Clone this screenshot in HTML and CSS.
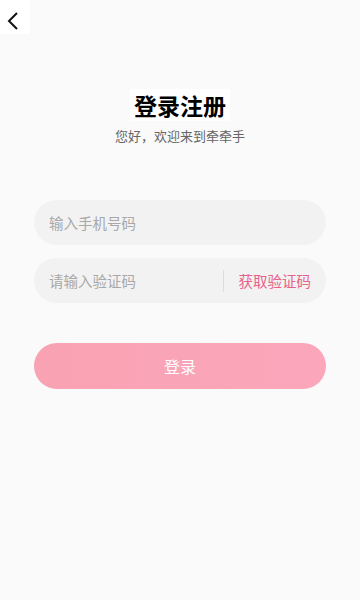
FILE: index.html
```html
<!DOCTYPE html>
<html lang="zh">
<head>
<meta charset="utf-8">
<link rel="stylesheet" href="styles.css">
</head>
<body>
<div class="page">
  <div class="topbar">
    <div class="back">
      <svg width="14" height="20" viewBox="0 0 14 20"><path d="M11 2 L3 10 L11 18" fill="none" stroke="#111" stroke-width="2"/></svg>
    </div>
  </div>
  <div class="header">
    <h1 class="title">登录注册</h1>
    <p class="subtitle">您好，欢迎来到牵牵手</p>
  </div>
  <div class="form">
    <div class="field"><span class="placeholder">输入手机号码</span></div>
    <div class="field code">
      <span class="placeholder">请输入验证码</span>
      <span class="divider"></span>
      <span class="getcode">获取验证码</span>
    </div>
    <div class="btn">登录</div>
  </div>
</div>
</body>
</html>
```
FILE: styles.css
```css
html, body { margin: 0; padding: 0; }
body {
  background: #fafafa;
  font-family: "Noto Sans CJK SC", "Noto Sans", sans-serif;
  width: 360px;
  height: 600px;
  overflow: hidden;
}
.page { display: flex; flex-direction: column; }
.topbar { height: 40px; display: flex; }
.back {
  width: 30px; height: 34px;
  background: #fff;
  display: flex; align-items: center; justify-content: center;
  padding-right: 4px; box-sizing: border-box;
  padding-top: 7px;
}
.header { display: flex; flex-direction: column; align-items: center; margin-top: 49px; }
.title {
  margin: 0; font-size: 23px; font-weight: 700; color: #000;
  line-height: 32px; background: #fff; padding: 0 4px;
}
.subtitle { margin: 0; margin-top: 5px; font-size: 13px; color: #666; line-height: 20px; }
.form { display: flex; flex-direction: column; padding: 0 34px; margin-top: 54px; }
.field {
  height: 45px; border-radius: 23px; background: #f2f2f2;
  display: flex; align-items: center; padding: 0 15px;
  margin-bottom: 13px;
}
.placeholder { font-size: 14.5px; color: #a8a8a8; flex: 1; }
.divider { width: 1px; height: 22px; background: #ddd; margin-right: 15px; }
.getcode { font-size: 14.5px; color: #e7618a; }
.btn {
  margin-top: 27px; height: 46px; border-radius: 23px;
  background: linear-gradient(90deg, #f8a2b3, #fca6bb);
  color: #fff; font-size: 16px;
  display: flex; align-items: center; justify-content: center;
}
```
